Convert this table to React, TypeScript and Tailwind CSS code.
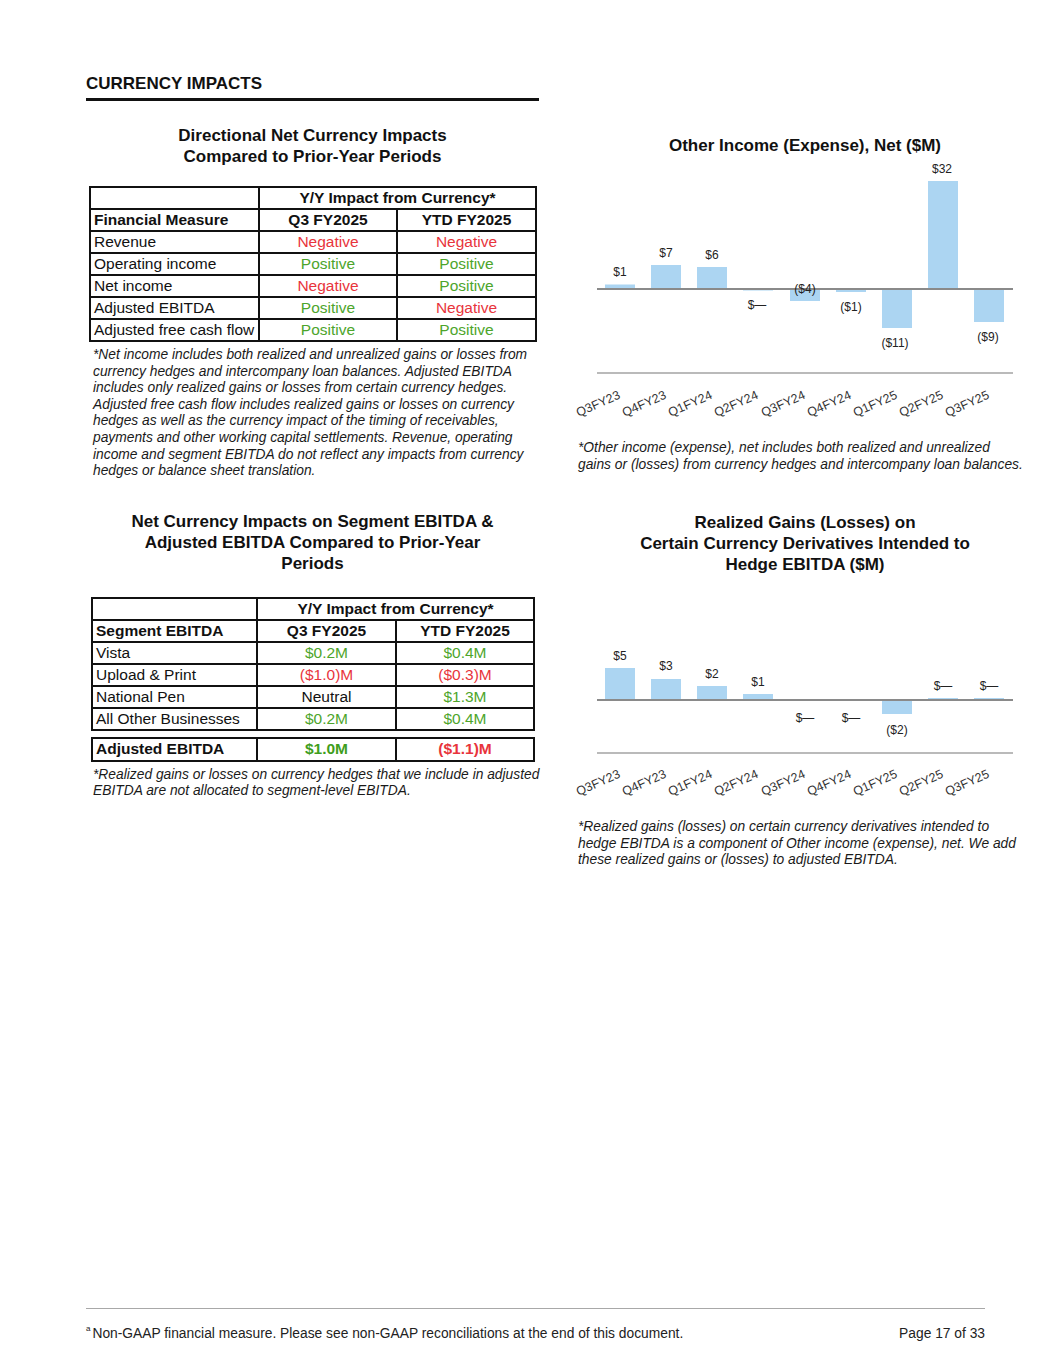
import React from "react";

const RED = "text-[#e8343c]";
const GREEN = "text-[#4da52b]";

type Bar = { h: number; label: string; ly: number; lx?: number };

const cats = ["Q3FY23", "Q4FY23", "Q1FY24", "Q2FY24", "Q3FY24", "Q4FY24", "Q1FY25", "Q2FY25", "Q3FY25"];
const centers = [50, 96, 142, 188, 235, 281, 327, 373, 419];

function Chart({ bars, zero, bottom, height, axisOffset }: { bars: Bar[]; zero: number; bottom: number; height: number; axisOffset: number }) {
  return (
    <svg width={470} height={height} viewBox={`0 0 470 ${height}`} className="block" style={{ fontFamily: '"Liberation Sans", Arial, sans-serif' }}>
      {bars.map((b, i) => {
        const c = centers[i];
        const y = b.h >= 0 ? zero - b.h : zero;
        return <rect key={"b" + i} x={c - 15} y={y} width={30} height={Math.abs(b.h)} fill="#acd5f2" />;
      })}
      <line x1={27} x2={443} y1={zero} y2={zero} stroke="#8a8a8a" strokeWidth={2} />
      <line x1={27} x2={443} y1={bottom} y2={bottom} stroke="#a3a3a3" strokeWidth={1.5} />
      {bars.map((b, i) => (
        <text key={"l" + i} x={b.lx ?? centers[i]} y={b.ly} fontSize={12} fill="#222" textAnchor="middle" dominantBaseline="central">
          {b.label}
        </text>
      ))}
      {cats.map((c, i) => (
        <text
          key={"c" + i}
          fontSize={12.5}
          fill="#333"
          textAnchor="end"
          transform={`translate(${centers[i] + 1} ${bottom + axisOffset}) rotate(-24)`}
        >
          {c}
        </text>
      ))}
    </svg>
  );
}

const chart1: Bar[] = [
  { h: 4.5, label: "$1", ly: 112 },
  { h: 24, label: "$7", ly: 93 },
  { h: 22, label: "$6", ly: 95 },
  { h: -1.5, label: "$—", ly: 145, lx: 187 },
  { h: -12, label: "($4)", ly: 129 },
  { h: -3, label: "($1)", ly: 147 },
  { h: -39, label: "($11)", ly: 183, lx: 325 },
  { h: 108, label: "$32", ly: 9, lx: 372 },
  { h: -33, label: "($9)", ly: 177, lx: 418 },
];

const chart2: Bar[] = [
  { h: 32, label: "$5", ly: 15 },
  { h: 21, label: "$3", ly: 25 },
  { h: 14, label: "$2", ly: 33 },
  { h: 6, label: "$1", ly: 41 },
  { h: -1, label: "$—", ly: 77 },
  { h: -1, label: "$—", ly: 77 },
  { h: -14, label: "($2)", ly: 89 },
  { h: 2, label: "$—", ly: 45 },
  { h: 2, label: "$—", ly: 45 },
];

const cell = "border-2 border-[#111] h-[22px] px-[3px] py-0 leading-[18px]";

export default function App() {
  return (
    <div className="w-[1055px] h-[1365px] bg-white flex flex-col text-[#111]" style={{ fontFamily: '"Liberation Sans", Arial, sans-serif' }}>
      <div className="flex pl-[86px]">
        {/* Left column */}
        <div className="w-[453px] flex flex-col">
          <div className="mt-[75px] text-[17px] leading-[18px] font-bold">CURRENCY IMPACTS</div>
          <div className="mt-[5px] h-[3px] bg-[#111]" />
          <div className="mt-[24px] text-center font-bold text-[17px] leading-[21px]">
            Directional Net Currency Impacts
            <br />
            Compared to Prior-Year Periods
          </div>
          <table className="mt-[19px] ml-[3px] w-[446px] border-collapse table-fixed text-[15.5px]">
            <colgroup>
              <col className="w-[169px]" />
              <col className="w-[138px]" />
              <col className="w-[139px]" />
            </colgroup>
            <tbody>
              <tr>
                <td className={cell}></td>
                <td className={`${cell} text-center font-bold`} colSpan={2}>
                  Y/Y Impact from Currency*
                </td>
              </tr>
              <tr className="font-bold">
                <td className={cell}>Financial Measure</td>
                <td className={`${cell} text-center`}>Q3 FY2025</td>
                <td className={`${cell} text-center`}>YTD FY2025</td>
              </tr>
              {[
                ["Revenue", "Negative", "Negative"],
                ["Operating income", "Positive", "Positive"],
                ["Net income", "Negative", "Positive"],
                ["Adjusted EBITDA", "Positive", "Negative"],
                ["Adjusted free cash flow", "Positive", "Positive"],
              ].map((r) => (
                <tr key={r[0]}>
                  <td className={`${cell} whitespace-nowrap`}>{r[0]}</td>
                  <td className={`${cell} text-center ${r[1] === "Negative" ? RED : GREEN}`}>{r[1]}</td>
                  <td className={`${cell} text-center ${r[2] === "Negative" ? RED : GREEN}`}>{r[2]}</td>
                </tr>
              ))}
            </tbody>
          </table>
          <div className="mt-[5px] ml-[7px] italic text-[13.8px] leading-[16.6px] text-[#1a1a1a] whitespace-nowrap">
            *Net income includes both realized and unrealized gains or losses from
            <br />
            currency hedges and intercompany loan balances. Adjusted EBITDA
            <br />
            includes only realized gains or losses from certain currency hedges.
            <br />
            Adjusted free cash flow includes realized gains or losses on currency
            <br />
            hedges as well as the currency impact of the timing of receivables,
            <br />
            payments and other working capital settlements. Revenue, operating
            <br />
            income and segment EBITDA do not reflect any impacts from currency
            <br />
            hedges or balance sheet translation.
          </div>
          <div className="mt-[31px] text-center font-bold text-[17px] leading-[21px]">
            Net Currency Impacts on Segment EBITDA &amp;
            <br />
            Adjusted EBITDA Compared to Prior-Year
            <br />
            Periods
          </div>
          <table className="mt-[23px] ml-[5px] w-[442px] border-collapse table-fixed text-[15.5px]">
            <colgroup>
              <col className="w-[165px]" />
              <col className="w-[139px]" />
              <col className="w-[138px]" />
            </colgroup>
            <tbody>
              <tr>
                <td className={cell}></td>
                <td className={`${cell} text-center font-bold`} colSpan={2}>
                  Y/Y Impact from Currency*
                </td>
              </tr>
              <tr className="font-bold">
                <td className={cell}>Segment EBITDA</td>
                <td className={`${cell} text-center`}>Q3 FY2025</td>
                <td className={`${cell} text-center`}>YTD FY2025</td>
              </tr>
              {[
                ["Vista", "$0.2M", "$0.4M"],
                ["Upload & Print", "($1.0)M", "($0.3)M"],
                ["National Pen", "Neutral", "$1.3M"],
                ["All Other Businesses", "$0.2M", "$0.4M"],
              ].map((r) => (
                <tr key={r[0]}>
                  <td className={`${cell} whitespace-nowrap`}>{r[0]}</td>
                  {[r[1], r[2]].map((v, j) => (
                    <td key={j} className={`${cell} text-center ${v === "Neutral" ? "text-[#111]" : v.startsWith("(") ? RED : GREEN}`}>
                      {v}
                    </td>
                  ))}
                </tr>
              ))}
            </tbody>
          </table>
          <table className="mt-[6px] ml-[5px] w-[442px] border-collapse table-fixed text-[15.5px] font-bold">
            <colgroup>
              <col className="w-[165px]" />
              <col className="w-[139px]" />
              <col className="w-[138px]" />
            </colgroup>
            <tbody>
              <tr>
                <td className={`${cell} h-[23px]`}>Adjusted EBITDA</td>
                <td className={`${cell} h-[23px] text-center text-[#3f9e1c]`}>$1.0M</td>
                <td className={`${cell} h-[23px] text-center ${RED}`}>($1.1)M</td>
              </tr>
            </tbody>
          </table>
          <div className="mt-[5px] ml-[7px] italic text-[13.8px] leading-[16.5px] text-[#1a1a1a] whitespace-nowrap">
            *Realized gains or losses on currency hedges that we include in adjusted
            <br />
            EBITDA are not allocated to segment-level EBITDA.
          </div>
        </div>

        {/* Right column */}
        <div className="ml-[31px] w-[470px] flex flex-col">
          <div className="mt-[135px] text-center font-bold text-[17px] leading-[21px]">Other Income (Expense), Net ($M)</div>
          <div className="mt-[4px]">
            <Chart bars={chart1} zero={129} bottom={213} height={270} axisOffset={25} />
          </div>
          <div className="mt-[10px] ml-[8px] italic text-[13.8px] leading-[16.5px] text-[#1a1a1a] whitespace-nowrap">
            *Other income (expense), net includes both realized and unrealized
            <br />
            gains or (losses) from currency hedges and intercompany loan balances.
          </div>
          <div className="mt-[39px] text-center font-bold text-[17px] leading-[21px]">
            Realized Gains (Losses) on
            <br />
            Certain Currency Derivatives Intended to
            <br />
            Hedge EBITDA ($M)
          </div>
          <div className="mt-[66px]">
            <Chart bars={chart2} zero={59} bottom={112} height={160} axisOffset={24} />
          </div>
          <div className="mt-[18px] ml-[8px] italic text-[13.8px] leading-[16.5px] text-[#1a1a1a] whitespace-nowrap">
            *Realized gains (losses) on certain currency derivatives intended to
            <br />
            hedge EBITDA is a component of Other income (expense), net. We add
            <br />
            these realized gains or (losses) to adjusted EBITDA.
          </div>
        </div>
      </div>

      {/* Footer */}
      <div className="mt-auto ml-[86px] mr-[70px] border-t border-[#a8a8a8] pt-[17px] pb-[23px] flex justify-between items-center text-[13.8px] leading-[16px] text-[#222]">
        <div className="flex items-start">
          <span className="text-[8px] leading-[8px] mr-[2px] -mt-[1px]">a</span>
          <span>Non-GAAP financial measure. Please see non-GAAP reconciliations at the end of this document.</span>
        </div>
        <div>Page 17 of 33</div>
      </div>
    </div>
  );
}
